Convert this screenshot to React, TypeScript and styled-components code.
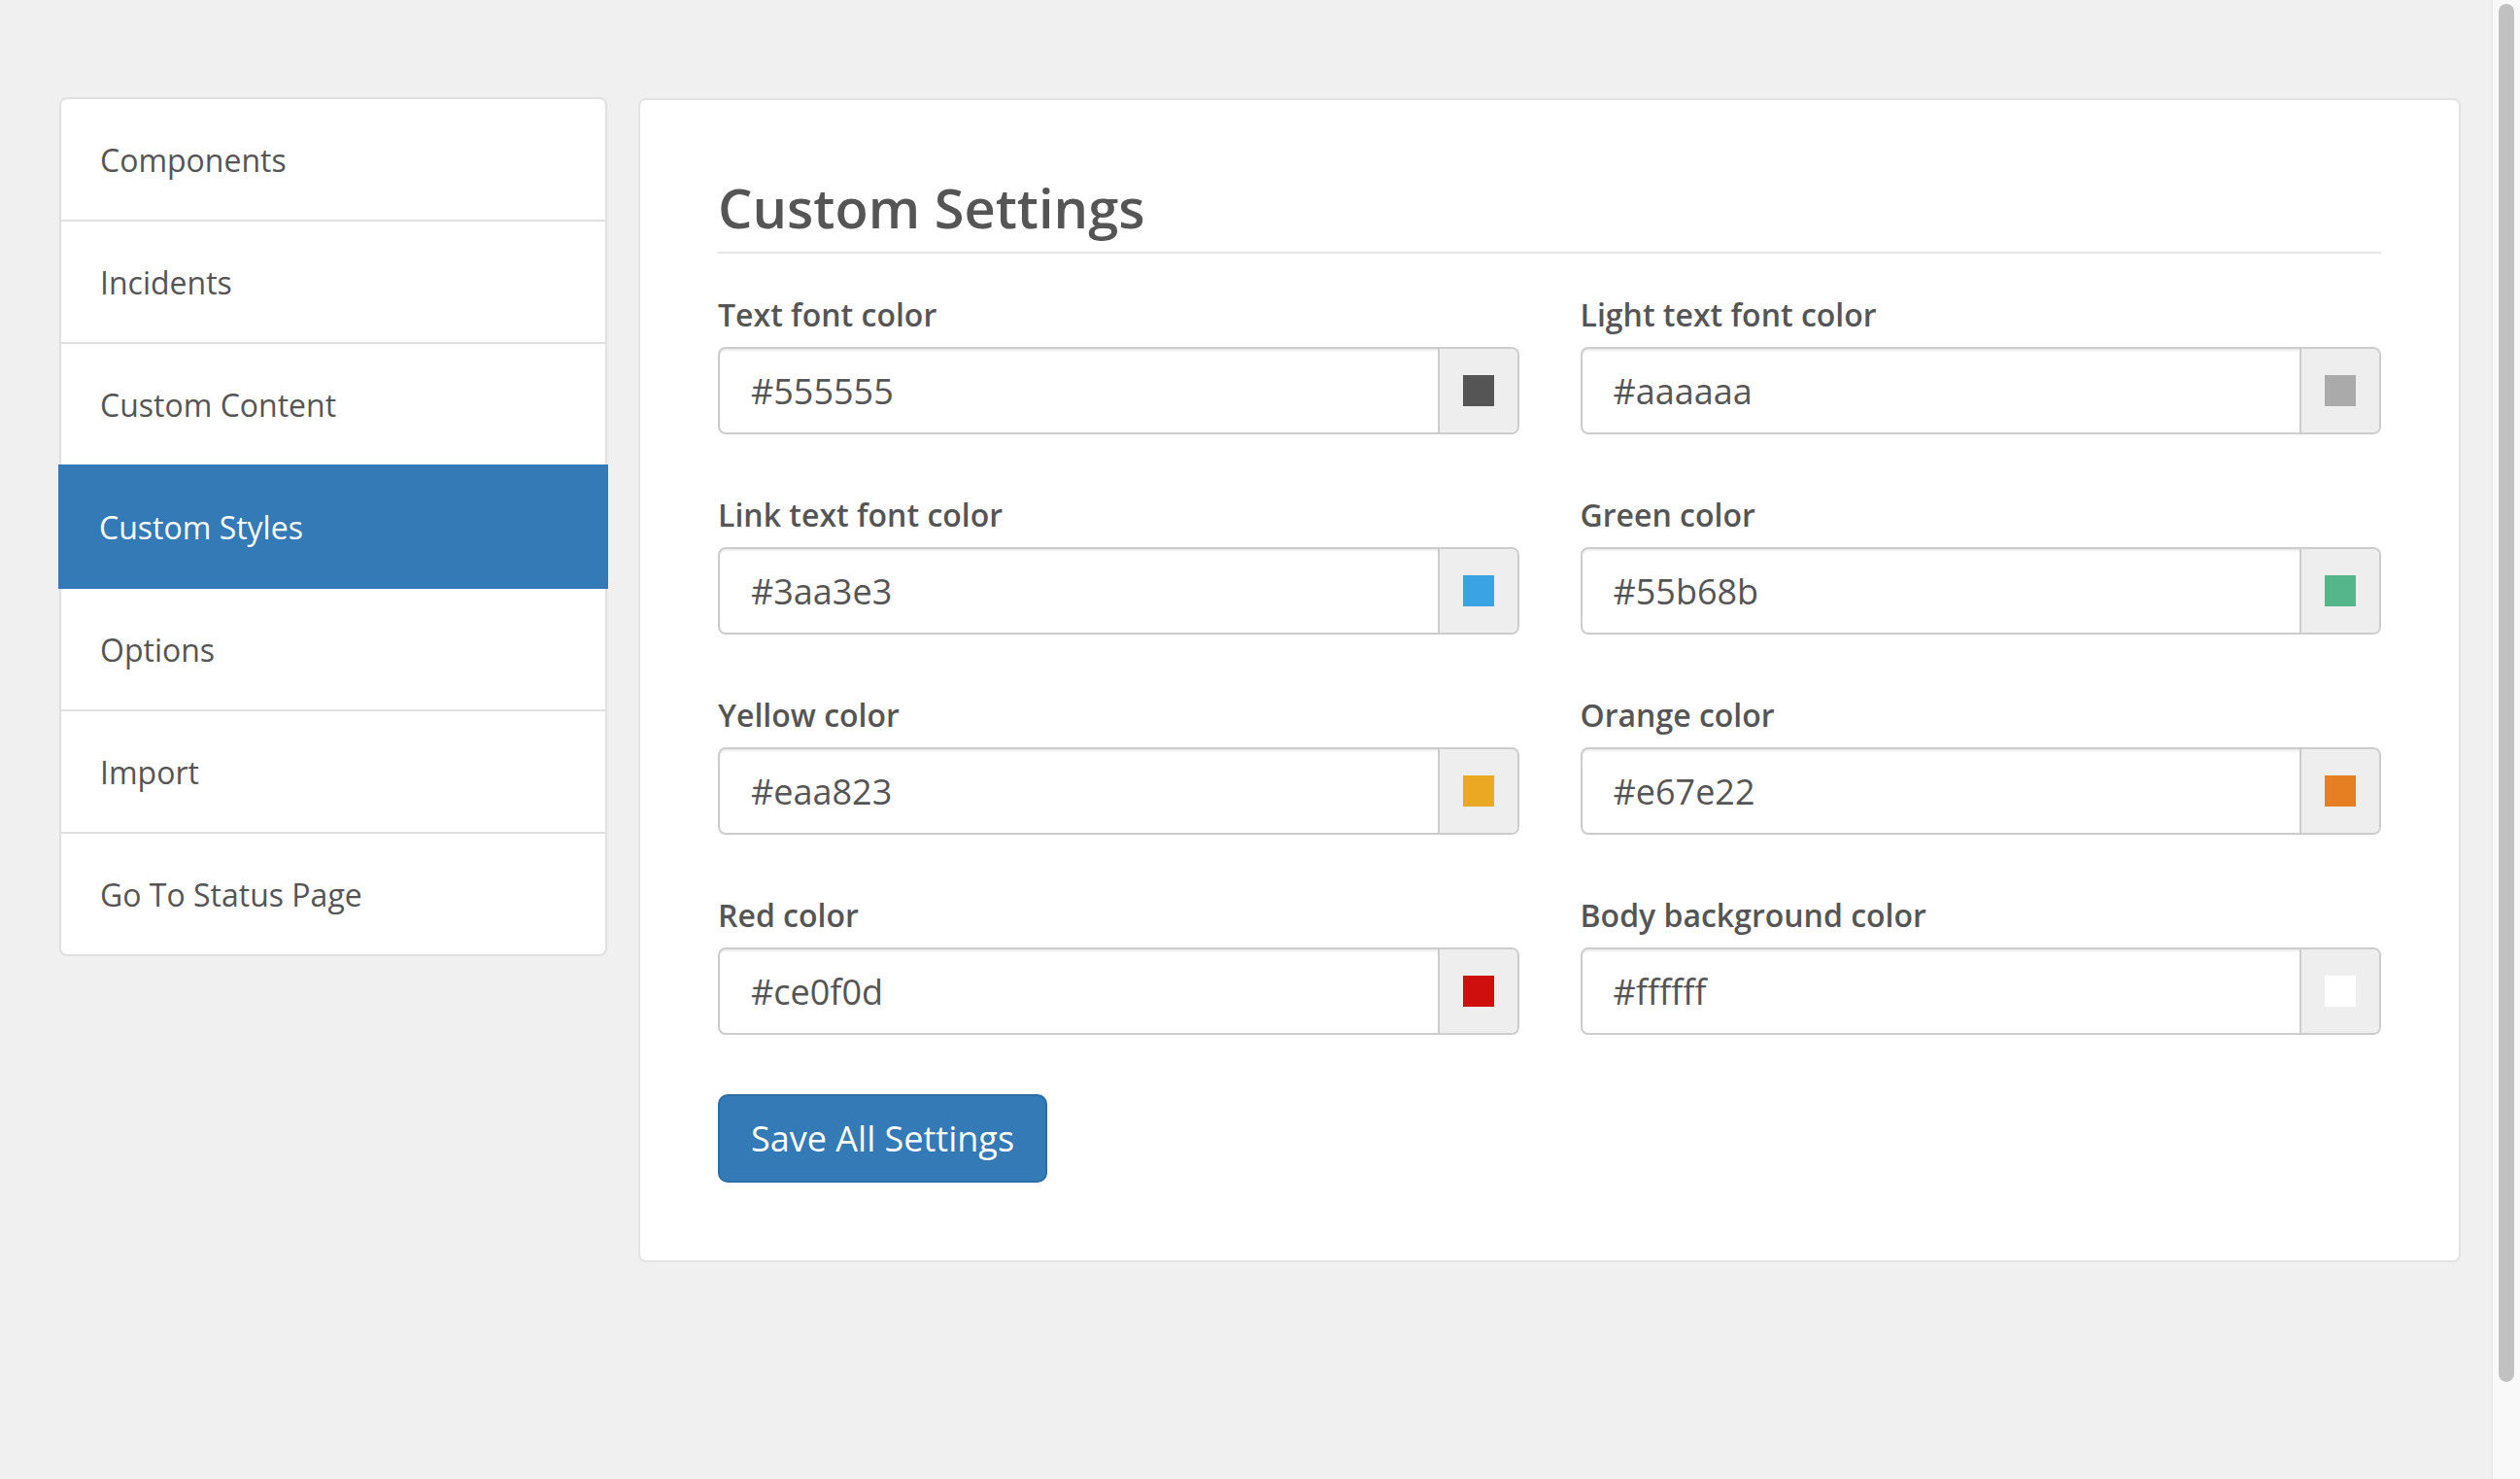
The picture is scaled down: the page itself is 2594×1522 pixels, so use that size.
import React from "react";
import styled, { createGlobalStyle } from "styled-components";

const Global = createGlobalStyle`
  html, body {
    margin: 0;
    padding: 0;
    height: 100%;
    overflow: hidden;
    background: #f0f0f0;
  }
  * { box-sizing: border-box; }
  body {
    font-family: "Open Sans", "Helvetica Neue", Arial, sans-serif;
    color: #555;
  }
`;

const Page = styled.div`
  display: flex;
  width: 2594px;
  height: 1522px;
`;

const Content = styled.div`
  flex: 1;
  display: flex;
  align-items: flex-start;
  gap: 32px;
  padding: 100px 32px 0 61px;
  background: #f0f0f0;
`;

const Sidebar = styled.nav`
  width: 564px;
  flex: none;
  display: flex;
  flex-direction: column;
`;

const NavItem = styled.a<{ $active?: boolean }>`
  position: relative;
  display: flex;
  align-items: center;
  height: 128px;
  margin-bottom: -2px;
  padding: 0 40px;
  font-size: 32px;
  color: ${(p) => (p.$active ? "#fff" : "#555")};
  background: ${(p) => (p.$active ? "#337ab7" : "#fff")};
  border: 2px solid ${(p) => (p.$active ? "#337ab7" : "#e0e0e0")};
  margin-left: ${(p) => (p.$active ? "-1px" : "0")};
  margin-right: ${(p) => (p.$active ? "-1px" : "0")};
  z-index: ${(p) => (p.$active ? 2 : 1)};
  text-decoration: none;
  &:first-child {
    border-top-left-radius: 8px;
    border-top-right-radius: 8px;
  }
  &:last-child {
    border-bottom-left-radius: 8px;
    border-bottom-right-radius: 8px;
  }
`;

const Panel = styled.section`
  flex: 1;
  margin-top: 1px;
  background: #fff;
  border: 2px solid #e3e3e3;
  border-radius: 8px;
  padding: 77px 80px 80px 80px;
`;

const Title = styled.h2`
  margin: 0 0 40px 0;
  font-size: 56px;
  font-weight: 600;
  line-height: 66px;
  color: #555;
  padding-bottom: 13px;
  border-bottom: 2px solid #e5e5e5;
`;

const Grid = styled.div`
  display: grid;
  grid-template-columns: 1fr 1fr;
  column-gap: 63px;
  row-gap: 60px;
`;

const Field = styled.div`
  display: flex;
  flex-direction: column;
`;

const Label = styled.label`
  display: block;
  font-size: 32px;
  font-weight: 600;
  line-height: 46px;
  margin-bottom: 10px;
  color: #555;
`;

const InputGroup = styled.div`
  display: flex;
  height: 90px;
  border: 2px solid #ccc;
  border-radius: 8px;
  overflow: hidden;
  box-shadow: inset 0 2px 2px rgba(0, 0, 0, 0.075);
`;

const TextInput = styled.input`
  flex: 1;
  min-width: 0;
  border: none;
  outline: none;
  background: transparent;
  padding: 0 32px;
  font-family: "Open Sans", "Helvetica Neue", Arial, sans-serif;
  font-size: 36px;
  color: #555;
`;

const Addon = styled.span`
  flex: none;
  width: 82px;
  display: flex;
  align-items: center;
  justify-content: center;
  background: #eee;
  border-left: 2px solid #ccc;
`;

const Swatch = styled.i<{ $color: string }>`
  display: block;
  width: 32px;
  height: 32px;
  background: ${(p) => p.$color};
`;

const SaveButton = styled.button`
  margin-top: 61px;
  height: 91px;
  padding: 0 32px;
  display: inline-flex;
  align-items: center;
  background: #337ab7;
  border: 2px solid #2e6da4;
  border-radius: 10px;
  color: #fff;
  font-family: "Open Sans", "Helvetica Neue", Arial, sans-serif;
  font-size: 36px;
  line-height: 48px;
`;

const ScrollTrack = styled.div`
  width: 29px;
  flex: none;
  height: 100%;
  background: #f9f9f9;
  border-left: 1px solid #e6e6e6;
  padding: 4px 0 0 6px;
`;

const ScrollThumb = styled.div`
  width: 16px;
  height: 1418px;
  border-radius: 8px;
  background: #c1c1c1;
`;

const navItems = [
  "Components",
  "Incidents",
  "Custom Content",
  "Custom Styles",
  "Options",
  "Import",
  "Go To Status Page",
];

const fields = [
  { label: "Text font color", value: "#555555" },
  { label: "Light text font color", value: "#aaaaaa" },
  { label: "Link text font color", value: "#3aa3e3" },
  { label: "Green color", value: "#55b68b" },
  { label: "Yellow color", value: "#eaa823" },
  { label: "Orange color", value: "#e67e22" },
  { label: "Red color", value: "#ce0f0d" },
  { label: "Body background color", value: "#ffffff" },
];

export default function App() {
  return (
    <>
      <Global />
      <Page>
        <Content>
          <Sidebar>
            {navItems.map((n) => (
              <NavItem key={n} $active={n === "Custom Styles"}>
                {n}
              </NavItem>
            ))}
          </Sidebar>
          <Panel>
            <Title>Custom Settings</Title>
            <Grid>
              {fields.map((f) => (
                <Field key={f.label}>
                  <Label>{f.label}</Label>
                  <InputGroup>
                    <TextInput defaultValue={f.value} />
                    <Addon>
                      <Swatch $color={f.value} />
                    </Addon>
                  </InputGroup>
                </Field>
              ))}
            </Grid>
            <SaveButton>Save All Settings</SaveButton>
          </Panel>
        </Content>
        <ScrollTrack>
          <ScrollThumb />
        </ScrollTrack>
      </Page>
    </>
  );
}
